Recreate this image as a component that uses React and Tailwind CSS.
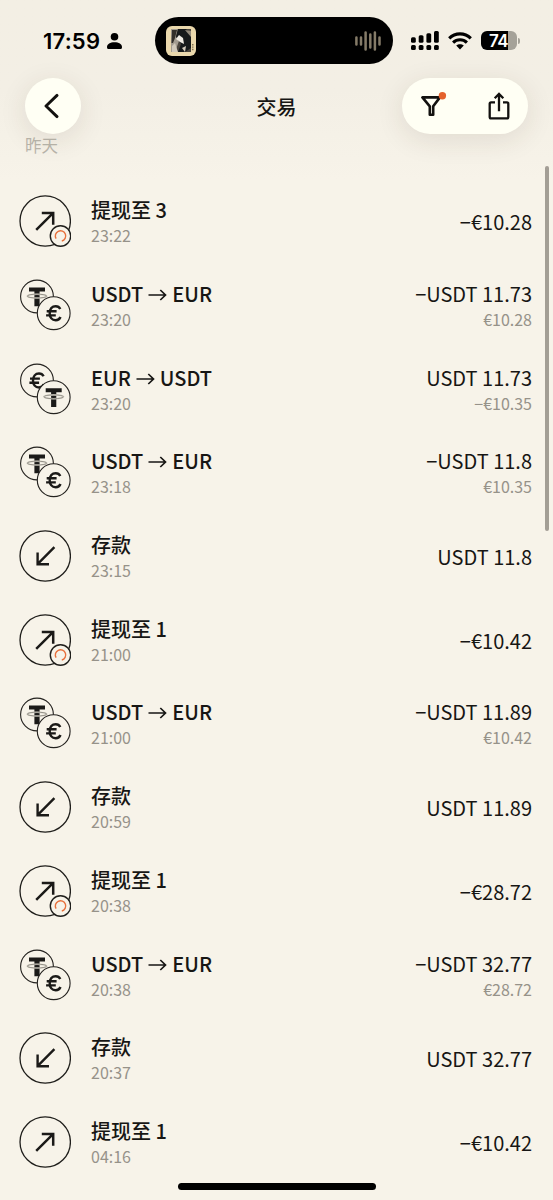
import React from 'react';

const transactions = [
  { type: 'out', title: '提现至 3', time: '23:22', amount: '−€10.28', pending: true },
  { type: 'swap', from: 'usdt', to: 'eur', time: '23:20', amount: '−USDT 11.73', sub: '€10.28' },
  { type: 'swap', from: 'eur', to: 'usdt', time: '23:20', amount: 'USDT 11.73', sub: '−€10.35' },
  { type: 'swap', from: 'usdt', to: 'eur', time: '23:18', amount: '−USDT 11.8', sub: '€10.35' },
  { type: 'in', title: '存款', time: '23:15', amount: 'USDT 11.8' },
  { type: 'out', title: '提现至 1', time: '21:00', amount: '−€10.42', pending: true },
  { type: 'swap', from: 'usdt', to: 'eur', time: '21:00', amount: '−USDT 11.89', sub: '€10.42' },
  { type: 'in', title: '存款', time: '20:59', amount: 'USDT 11.89' },
  { type: 'out', title: '提现至 1', time: '20:38', amount: '−€28.72', pending: true },
  { type: 'swap', from: 'usdt', to: 'eur', time: '20:38', amount: '−USDT 32.77', sub: '€28.72' },
  { type: 'in', title: '存款', time: '20:37', amount: 'USDT 32.77' },
  { type: 'out', title: '提现至 1', time: '04:16', amount: '−€10.42' },
];

// Coin glyphs are drawn around their own centre
const Coin = ({ kind, x, y }) => (
  <g transform={`translate(${x} ${y})`}>
    <circle r="16.4" fill="#f7f3e9" stroke="#24221f" strokeWidth="1.1" />
    {kind === 'usdt' ? (
      <>
        <path d="M-8 -8.9H8V-4.9H2.6V9.8H-2.6V-4.9H-8Z" fill="#1b1a18" />
        <ellipse cy="-0.4" rx="9.8" ry="1.9" fill="none" stroke="#d8d4ca" strokeWidth="1.6" />
        <ellipse cy="-0.4" rx="9.8" ry="1.9" fill="none" stroke="#77746c" strokeWidth="0.7" />
      </>
    ) : (
      <path
        d="M6.6 -4.2C5.7 -6 4 -7 2 -7C-1.7 -7 -4 -4.2 -4 0C-4 4.2 -1.7 7 2 7C4.3 7 6 5.9 6.8 3.8M-7 -1.9H2.9M-7.6 2.2H2.1"
        fill="none"
        stroke="#1b1a18"
        strokeWidth="2.4"
      />
    )}
  </g>
);

const TxIcon = ({ tx }) => {
  if (tx.type === 'swap') {
    return (
      <svg width="52" height="52" viewBox="0 0 52 52" className="shrink-0">
        <Coin kind={tx.from} x={18} y={17.5} />
        <Coin kind={tx.to} x={34.7} y={34.2} />
      </svg>
    );
  }
  return (
    <svg width="52" height="52" viewBox="0 0 52 52" fill="none" className="shrink-0">
      <circle cx="26.2" cy="26" r="25.2" stroke="#1f1e1b" strokeWidth="1.3" />
      {tx.type === 'out' ? (
        <path d="M17.2 34.8L34 18.2M22.8 18H34.2V29.8" stroke="#1b1a18" strokeWidth="2.5" />
      ) : (
        <path d="M35.4 17.2L18.8 33.8M18.6 22.4V34.2H30" stroke="#1b1a18" strokeWidth="2.4" />
      )}
      {tx.pending && (
        <>
          <circle cx="41.5" cy="41" r="10.2" fill="#f7f3e9" stroke="#1f1e1b" strokeWidth="1.4" />
          <path d="M37.1 43.7A5.2 5.2 0 1 1 42.8 46" stroke="#e8703c" strokeWidth="1.4" />
        </>
      )}
    </svg>
  );
};

const CurrencyArrow = () => (
  <svg width="19" height="12" viewBox="0 0 19 12" fill="none" className="mx-[5px] mt-[2px]">
    <path d="M0.5 6H17.5M12.3 1L17.5 6L12.3 11" stroke="#171614" strokeWidth="1.7" />
  </svg>
);

const TxRow = ({ tx }) => (
  <li className="flex h-[83.7px] items-center pl-[19px] pr-[21px]">
    <TxIcon tx={tx} />
    <div className="ml-5 flex-1 pt-[2px]">
      <p className="flex h-[26px] items-center text-xl font-medium leading-[26px]">
        {tx.type === 'swap' ? (
          <>
            {tx.from.toUpperCase()}
            <CurrencyArrow />
            {tx.to.toUpperCase()}
          </>
        ) : (
          tx.title
        )}
      </p>
      <p className="text-base leading-6 text-[#969289]">{tx.time}</p>
    </div>
    <div className="pt-[2px] text-right">
      <p className="text-xl leading-[26px]">{tx.amount}</p>
      {tx.sub && <p className="text-base leading-6 text-[#969289]">{tx.sub}</p>}
    </div>
  </li>
);

const Island = () => (
  <div className="flex h-[47px] w-[238px] items-center justify-between rounded-full bg-black pl-[11px] pr-3">
    <svg width="30" height="30" viewBox="0 0 30 30">
      <rect width="30" height="30" rx="6" fill="#ead8ac" />
      <rect x="5" y="3" width="20" height="23" fill="#4a453d" />
      <path d="M5 3H12L10 10L13 15L9 26H5Z" fill="#a39c90" />
      <path d="M6 4H11L9 12L7 17H5.5Z" fill="#33302b" />
      <path d="M12 3H20L25 9V22L19 26H12L15 18L10 11Z" fill="#171a1b" />
      <path d="M13 9L17 12L18 18L14 16L10 13Z" fill="#f0ece4" />
      <path d="M19 4L25 5V11Z" fill="#938a7b" />
      <path d="M6 20L9 17L12 26H6ZM16 22L20 20L19 26Z" fill="#d2cabb" />
      <path d="M26.8 18V25" stroke="#6b5d3e" strokeWidth="1.2" strokeDasharray="1.4 1" />
    </svg>
    <svg width="26" height="20" viewBox="0 0 26 20" stroke="#857b68" strokeWidth="2.5" strokeLinecap="round">
      <path d="M1.4 6.5V13.5M6 6.5V13.5M10.6 1.4V18.6M15.3 3.5V16.5M19.9 1.4V18.6M24.5 6.5V13.5" />
    </svg>
  </div>
);

const StatusBar = () => (
  <div className="flex h-[47px] items-center font-['Inter','Liberation_Sans',sans-serif] text-black">
    <div className="flex w-[155px] items-center pl-[43px]">
      <span className="w-[59px] text-[22px] font-semibold leading-none tracking-[0.2px]">17:59</span>
      <svg width="15" height="16" viewBox="0 0 15 16" className="ml-[5px]">
        <circle cx="7.5" cy="3.8" r="3.8" />
        <path d="M0 14.2C0 11 3.2 9.2 7.5 9.2S15 11 15 14.2C15 15.4 14.5 16 13.4 16H1.6C0.5 16 0 15.4 0 14.2Z" />
      </svg>
    </div>
    <Island />
    <svg width="28" height="19" viewBox="0 0 28 19" className="ml-[18px]">
      <rect x="0" y="6.2" width="4.8" height="5.6" rx="1.5" />
      <rect x="7.7" y="4.3" width="4.8" height="7.5" rx="1.5" />
      <rect x="15.4" y="2.2" width="4.8" height="9.6" rx="1.5" />
      <rect x="23" y="0" width="4.8" height="11.8" rx="1.5" />
      <rect x="0" y="14" width="4.8" height="5" rx="1.5" />
      <rect x="7.7" y="14" width="4.8" height="5" rx="1.5" />
      <rect x="15.4" y="14" width="4.8" height="5" rx="1.5" />
      <rect x="23" y="14" width="4.8" height="5" rx="1.5" />
    </svg>
    <svg width="24" height="18" viewBox="0 0 24 18" fill="none" stroke="#000" strokeWidth="3.1" className="ml-[9px]">
      <path d="M1.2 6.4C7.2 0.4 16.8 0.4 22.8 6.4" />
      <path d="M5.1 10.6C9 6.8 15 6.8 18.9 10.6" />
      <path d="M8.2 13.6C10.4 11.7 13.6 11.7 15.8 13.6L12 17.6Z" fill="#000" stroke="none" />
    </svg>
    <div className="ml-[9px] flex h-[19px] w-9 items-center justify-center rounded-[6px] bg-linear-to-r from-black from-75% to-[#a5a299] to-75% pr-px pt-px text-[17px] font-semibold leading-none tracking-[-0.5px] text-white">
      74
    </div>
    <div className="ml-px h-[6px] w-[2px] rounded-r-full bg-[#a5a299]" />
  </div>
);

const NavBar = () => (
  <div className="relative z-10 mt-[13.5px] grid h-[56px] grid-cols-[126px_1fr_126px] items-center px-[25px]">
    <button className="flex size-[56px] items-center justify-center rounded-full bg-[#fffff4] shadow-[0_6px_28px_rgba(60,50,30,0.11)]">
      <svg width="16" height="26" viewBox="0 0 16 26" fill="none" className="mr-[4px]">
        <path d="M14 2.4L3 13L14 23.6" stroke="#12110f" strokeWidth="2.9" strokeLinecap="round" strokeLinejoin="round" />
      </svg>
    </button>
    <h1 className="pt-[3px] text-center text-[20px] font-medium">交易</h1>
    <div className="flex h-[56px] items-center justify-between rounded-full bg-[#fffff4] pl-[19px] pr-[18px] shadow-[0_6px_28px_rgba(60,50,30,0.11)]">
      <svg width="26" height="28" viewBox="0 0 26 28" fill="none">
        <path d="M1.4 5.4H18.9L12.2 14.3V22.8H8.8V14.3Z" stroke="#12110f" strokeWidth="2.6" strokeLinejoin="round" />
        <circle cx="21.4" cy="3.8" r="3.7" fill="#e4622c" />
      </svg>
      <svg width="22" height="28" viewBox="0 0 22 28" fill="none" stroke="#12110f" strokeWidth="2.3">
        <path d="M7 10.3H3.1Q1.7 10.3 1.7 11.7V25Q1.7 26.4 3.1 26.4H18.9Q20.3 26.4 20.3 25V11.7Q20.3 10.3 18.9 10.3H15" />
        <path d="M11 19.2V2M6.7 6.3L11 2L15.3 6.3" />
      </svg>
    </div>
  </div>
);

const App = () => {
  return (
    <div className="relative h-[1200px] w-[553px] overflow-hidden bg-[#f7f3e9] font-['Noto_Sans_CJK_SC',sans-serif] text-[#171614]">
      <header className="h-[179.5px] bg-linear-to-b from-[#f3efe4] via-[#f3efe5] to-[#f7f3e9] pt-[17px]">
        <StatusBar />
        <NavBar />
        <p className="pl-[25px] text-[16.5px] leading-[23px] text-[#b9b5ab]">昨天</p>
      </header>

      <ul>
        {transactions.map((tx, i) => (
          <TxRow key={i} tx={tx} />
        ))}
      </ul>

      {/* Scrollbar */}
      <div className="absolute right-[4px] top-[166px] h-[365px] w-[4px] rounded-full bg-[#a39e95]" />

      {/* Home indicator */}
      <div className="absolute bottom-[10px] left-[178px] h-[7px] w-[198px] rounded-full bg-black" />
    </div>
  );
};

export default App;
